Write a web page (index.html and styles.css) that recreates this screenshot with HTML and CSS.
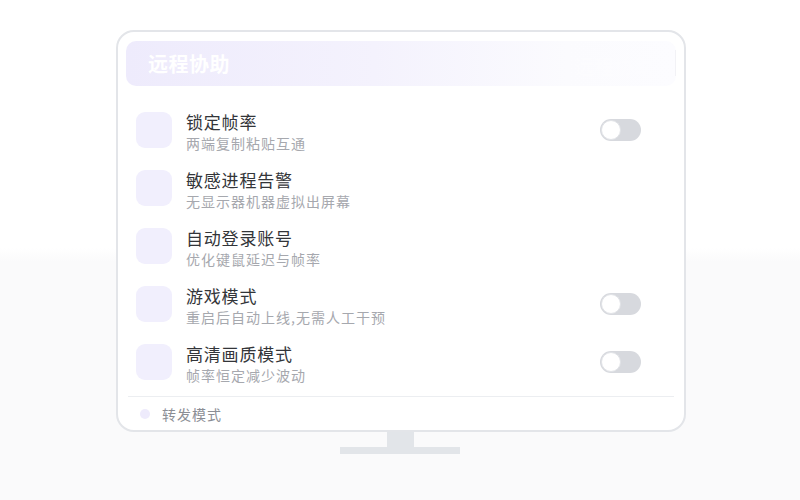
FILE: index.html
```html
<!DOCTYPE html>
<html lang="zh">
<head>
<meta charset="utf-8">
<link rel="stylesheet" href="styles.css">
</head>
<body>
<div class="stage">
  <div class="monitor">
    <div class="header">
      <span class="title">远程协助</span>
      <span class="ghost">远程协助</span>
      <span class="edge"></span>
    </div>
    <div class="list">
      <div class="row">
        <div class="icon"></div>
        <div class="text"><div class="name">锁定帧率</div><div class="desc">两端复制粘贴互通</div></div>
        <div class="toggle"><span class="knob"></span></div>
      </div>
      <div class="row">
        <div class="icon"></div>
        <div class="text"><div class="name">敏感进程告警</div><div class="desc">无显示器机器虚拟出屏幕</div></div>
      </div>
      <div class="row">
        <div class="icon"></div>
        <div class="text"><div class="name">自动登录账号</div><div class="desc">优化键鼠延迟与帧率</div></div>
      </div>
      <div class="row">
        <div class="icon"></div>
        <div class="text"><div class="name">游戏模式</div><div class="desc">重启后自动上线,无需人工干预</div></div>
        <div class="toggle"><span class="knob"></span></div>
      </div>
      <div class="row">
        <div class="icon"></div>
        <div class="text"><div class="name">高清画质模式</div><div class="desc">帧率恒定减少波动</div></div>
        <div class="toggle"><span class="knob"></span></div>
      </div>
    </div>
    <div class="footer">
      <span class="dot"></span>
      <span class="ftext">转发模式</span>
    </div>
  </div>
  <div class="neck"></div>
  <div class="base"></div>
</div>
</body>
</html>
```
FILE: styles.css
```css
* { box-sizing: border-box; }
html, body { margin: 0; padding: 0; }
body {
  width: 800px;
  height: 500px;
  overflow: hidden;
  background: linear-gradient(#ffffff 0, #ffffff 248px, #fafafb 262px, #fafafb 100%);
  font-family: "Noto Sans CJK SC", "Noto Sans", sans-serif;
}
.stage {
  padding-top: 30px;
  display: flex;
  flex-direction: column;
  align-items: center;
}
.monitor {
  width: 570px;
  height: 402px;
  margin-left: 2px;
  border: 2px solid #e3e5e9;
  border-radius: 18px;
  background: #ffffff;
  padding: 9px 8px 0 8px;
  display: flex;
  flex-direction: column;
}
.header {
  position: relative;
  height: 45px;
  border-radius: 10px;
  background: linear-gradient(90deg, #eeebfc 0%, #f4f2fd 45%, #fbfbfe 80%, #fcfcff 100%);
  display: flex;
  align-items: center;
  padding-left: 22px;
}
.title {
  color: #ffffff;
  font-size: 20px;
  font-weight: 700;
  letter-spacing: 0.5px;
}
.ghost {
  position: absolute;
  right: 22px;
  top: 11px;
  color: #fdfdff;
  font-size: 20px;
  font-weight: 700;
  opacity: 0.6;
}
.edge {
  position: absolute;
  right: 0;
  top: 9px;
  width: 1px;
  height: 26px;
  background: #f2f2f6;
}
.list {
  padding: 26px 0 0 10px;
  display: flex;
  flex-direction: column;
  gap: 22px;
}
.row {
  height: 36px;
  display: flex;
  align-items: flex-start;
}
.icon {
  width: 36px;
  height: 36px;
  border-radius: 9px;
  background: #f1effd;
  flex: none;
}
.text {
  margin-left: 14px;
  flex: 1;
}
.name {
  font-size: 17px;
  line-height: 20px;
  color: #333539;
  letter-spacing: 0.8px;
}
.desc {
  margin-top: 2px;
  font-size: 14px;
  line-height: 18px;
  color: #a6a8ae;
  letter-spacing: 1px;
}
.toggle {
  width: 41px;
  height: 22px;
  margin-top: 7px;
  margin-right: 35px;
  border-radius: 11px;
  background: #d7d9de;
  padding: 1px;
  flex: none;
}
.knob {
  display: block;
  width: 20px;
  height: 20px;
  border-radius: 50%;
  background: #ffffff;
  border: 1px solid #e1e3e7;
}
.footer {
  margin: 16px 2px 0 2px;
  border-top: 1px solid #eceef1;
  flex: 1;
  display: flex;
  align-items: center;
  padding-left: 12px;
}
.dot {
  width: 10px;
  height: 10px;
  border-radius: 50%;
  background: #eeebfc;
}
.ftext {
  margin-left: 12px;
  font-size: 14px;
  color: #8b8e95;
  letter-spacing: 1px;
}
.neck {
  width: 27px;
  height: 15px;
  background: #e2e5e9;
}
.base {
  width: 120px;
  height: 7px;
  background: #e2e5e9;
}
```
